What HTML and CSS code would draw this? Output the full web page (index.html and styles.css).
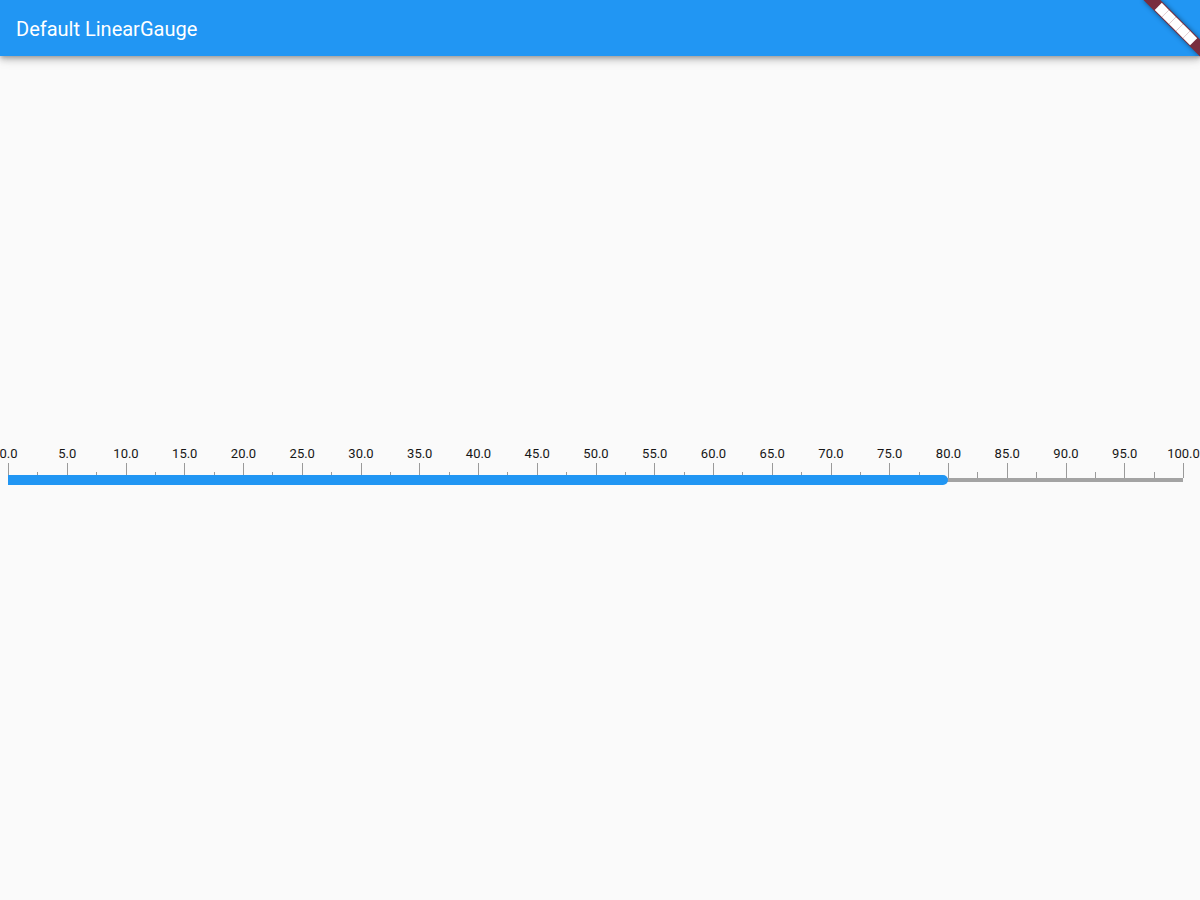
FILE: index.html
```html
<!DOCTYPE html>
<html lang="en">
<head>
<meta charset="utf-8">
<title>Default LinearGauge</title>
<link rel="stylesheet" href="styles.css">
</head>
<body>
<div class="page">
  <header class="appbar">
    <h1 class="title">Default LinearGauge</h1>
  </header>
  <main class="content">
    <div class="gauge">
      <div class="labels">
        <span class="label"><span>0.0</span></span>
        <span class="label"><span>5.0</span></span>
        <span class="label"><span>10.0</span></span>
        <span class="label"><span>15.0</span></span>
        <span class="label"><span>20.0</span></span>
        <span class="label"><span>25.0</span></span>
        <span class="label"><span>30.0</span></span>
        <span class="label"><span>35.0</span></span>
        <span class="label"><span>40.0</span></span>
        <span class="label"><span>45.0</span></span>
        <span class="label"><span>50.0</span></span>
        <span class="label"><span>55.0</span></span>
        <span class="label"><span>60.0</span></span>
        <span class="label"><span>65.0</span></span>
        <span class="label"><span>70.0</span></span>
        <span class="label"><span>75.0</span></span>
        <span class="label"><span>80.0</span></span>
        <span class="label"><span>85.0</span></span>
        <span class="label"><span>90.0</span></span>
        <span class="label"><span>95.0</span></span>
        <span class="label"><span>100.0</span></span>
      </div>
      <div class="ticks">
        <i class="tick major"></i><i class="tick minor"></i>
        <i class="tick major"></i><i class="tick minor"></i>
        <i class="tick major"></i><i class="tick minor"></i>
        <i class="tick major"></i><i class="tick minor"></i>
        <i class="tick major"></i><i class="tick minor"></i>
        <i class="tick major"></i><i class="tick minor"></i>
        <i class="tick major"></i><i class="tick minor"></i>
        <i class="tick major"></i><i class="tick minor"></i>
        <i class="tick major"></i><i class="tick minor"></i>
        <i class="tick major"></i><i class="tick minor"></i>
        <i class="tick major"></i><i class="tick minor"></i>
        <i class="tick major"></i><i class="tick minor"></i>
        <i class="tick major"></i><i class="tick minor"></i>
        <i class="tick major"></i><i class="tick minor"></i>
        <i class="tick major"></i><i class="tick minor"></i>
        <i class="tick major"></i><i class="tick minor"></i>
        <i class="tick major"></i><i class="tick minor"></i>
        <i class="tick major"></i><i class="tick minor"></i>
        <i class="tick major"></i><i class="tick minor"></i>
        <i class="tick major"></i><i class="tick minor"></i>
        <i class="tick major"></i>
      </div>
      <div class="track">
        <div class="bar" style="width: 80%"></div>
      </div>
    </div>
  </main>
  <div class="banner-anchor" aria-hidden="true">
    <div class="banner">
      <span class="blk"></span><span class="blk"></span><span class="blk"></span><span class="blk"></span><span class="blk"></span>
    </div>
  </div>
</div>
</body>
</html>
```
FILE: styles.css
```css
html, body {
  margin: 0;
  padding: 0;
  background: #fafafa;
  overflow: hidden;
}

.page {
  position: relative;
  width: 1200px;
  height: 900px;
  overflow: hidden;
  display: flex;
  flex-direction: column;
  font-family: Roboto, "Noto Sans", sans-serif;
  background: #fafafa;
}

.appbar {
  position: relative;
  z-index: 2;
  height: 56px;
  flex: 0 0 56px;
  background: #2196f3;
  display: flex;
  align-items: center;
  padding: 0 16px;
  box-shadow: 0 2px 4px -1px rgba(0, 0, 0, 0.22), 0 4px 6px 0 rgba(0, 0, 0, 0.16), 0 2px 12px 0 rgba(0, 0, 0, 0.14);
}

.title {
  margin: 0;
  padding-top: 2px;
  font-size: 20px;
  font-weight: 400;
  line-height: 54px;
  color: #ffffff;
  letter-spacing: 0;
}

.content {
  flex: 1;
  padding-top: 390px;
}

.gauge {
  margin-left: 8px;
  width: 1176px;
  display: flex;
  flex-direction: column;
}

.labels {
  display: flex;
  justify-content: space-between;
  padding: 0 0.5px;
  height: 16px;
  margin-bottom: 1px;
}

.label {
  width: 0;
  display: flex;
  justify-content: center;
  white-space: nowrap;
  font-size: 13px;
  line-height: 16px;
  color: #161616;
}

.ticks {
  display: flex;
  justify-content: space-between;
  align-items: flex-end;
  height: 15px;
}

.tick {
  display: block;
  width: 1px;
  background: #9a9a9a;
}

.tick.major {
  height: 15px;
}

.tick.minor {
  height: 6px;
}

.track {
  position: relative;
  width: 1175px;
  height: 4px;
  background: #a3a3a3;
}

.bar {
  position: absolute;
  left: 0;
  top: -3px;
  height: 10px;
  background: #2196f3;
  border-radius: 0 5px 5px 0;
}

.banner-anchor {
  position: absolute;
  top: 0;
  right: 0;
  width: 0;
  height: 0;
  z-index: 5;
  transform: rotate(45deg);
}

.banner {
  position: absolute;
  left: -40px;
  top: 28px;
  width: 80px;
  height: 12px;
  background: #792e3f;
  box-shadow: 0 0 5px rgba(0, 0, 0, 0.45);
  display: flex;
  justify-content: center;
  align-items: center;
}

.blk {
  display: block;
  width: 10.2px;
  height: 10.2px;
  background: #ffffff;
}
```
